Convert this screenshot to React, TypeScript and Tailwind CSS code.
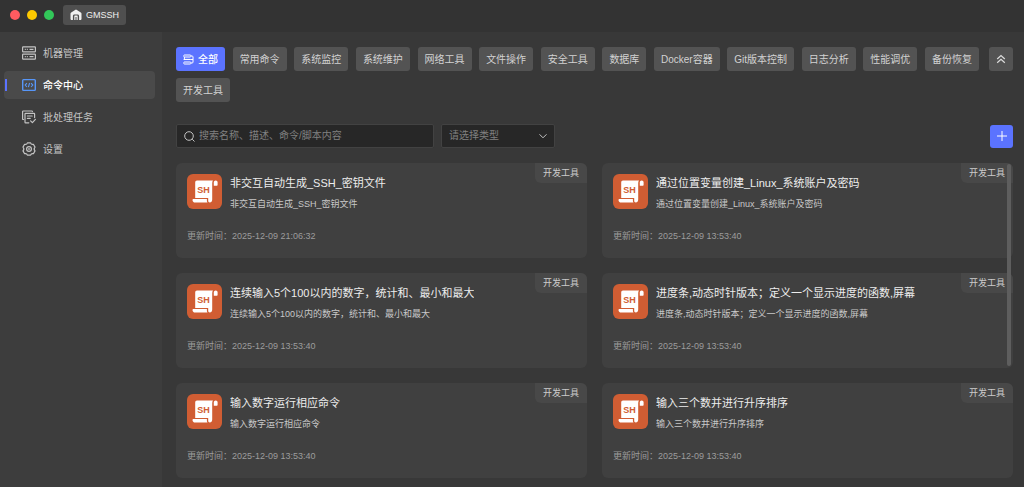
import { useState } from "react";
import type { ReactNode } from "react";

const tags = [
    "常用命令", "系统监控", "系统维护", "网络工具", "文件操作", "安全工具",
    "数据库", "Docker容器", "Git版本控制", "日志分析", "性能调优", "备份恢复",
];
const moreTags = ["开发工具"];

const scripts = [
    { title: "非交互自动生成_SSH_密钥文件", time: "2025-12-09 21:06:32" },
    { title: "通过位置变量创建_Linux_系统账户及密码", time: "2025-12-09 13:53:40" },
    { title: "连续输入5个100以内的数字，统计和、最小和最大", time: "2025-12-09 13:53:40" },
    { title: "进度条,动态时针版本；定义一个显示进度的函数,屏幕", time: "2025-12-09 13:53:40" },
    { title: "输入数字运行相应命令", time: "2025-12-09 13:53:40" },
    { title: "输入三个数并进行升序排序", time: "2025-12-09 13:53:40" },
];

function HomeIcon() {
    return (
        <svg viewBox="0 0 12 12" className="size-3" fill="currentColor" aria-hidden="true">
            <path fillRule="evenodd" d="M5.1.9a1.6 1.6 0 0 1 1.8 0l3.9 2.5c.5.3.7.8.7 1.4v5c0 .8-.5 1.3-1.200 1.300H9.100V7c0-1-.6-1.600-1.600-1.600h-3C3.500 5.400 2.900 6 2.900 7v4.100H1.700C1 11.100.5 10.600.5 9.800v-5c0-.6.2-1.100.7-1.400Z" />
            <path d="M4.300 7.100c0-.4.2-.6.6-.6h2.200c.4 0 .6.2.6.6v4H6.500V7.900h-1v3.200H4.300Z" />
        </svg>
    );
}

function ServerIcon() {
    return (
        <svg viewBox="0 0 14 14" className="size-3.5" fill="none" stroke="currentColor" strokeWidth="1.200" aria-hidden="true">
            <rect x=".6" y=".9" width="12.8" height="5" rx=".6" />
            <rect x=".6" y="8.1" width="12.8" height="5" rx=".6" />
            <path d="M2.800 3.400h1M4.800 3.400h1M7.500 3.400h4M2.800 10.600h1M4.800 10.600h1M7.500 10.600h4" />
        </svg>
    );
}

function CodeIcon() {
    return (
        <svg viewBox="0 0 14 14" className="size-3.5" fill="none" stroke="#5796f8" aria-hidden="true">
            <rect x=".7" y="1.6" width="12.6" height="10.8" rx=".8" strokeWidth="1.4" />
            <path d="M4.900 5.200 3.200 7.100 4.900 9M9.100 5.200l1.700 1.900L9.100 9M7.600 5 6.400 9.200" strokeWidth="1.100" />
        </svg>
    );
}

function TaskIcon() {
    return (
        <svg viewBox="0 0 14 14" className="size-3.5" fill="none" stroke="currentColor" strokeWidth="1.200" strokeLinecap="round" strokeLinejoin="round" aria-hidden="true">
            <path d="M1.600 9.500h-.4a.6.6 0 0 1-.6-.6V1.600a.6.6 0 0 1 .6-.6h8.600a.6.6 0 0 1 .6.6" />
            <path d="M12.600 7.600V3.900a.6.6 0 0 0-.6-.6H3.600a.6.6 0 0 0-.6.6v8.300a.6.6 0 0 0 .6.6h3.200" />
            <path d="M5.400 6h4.800M5.400 8.400h2.800M8.600 10.800l1.800 1.800 3-3.200" />
        </svg>
    );
}

function SettingsIcon() {
    return (
        <svg viewBox="0 0 14 14" className="size-3.5" fill="none" stroke="currentColor" strokeWidth="1.200" strokeLinejoin="round" aria-hidden="true">
            <path d="M5.400.8h3.200c.4 1.400 1.300 1.900 2.800 1.500L13 5.100c-1.100 1.200-1.100 2.600 0 3.800l-1.600 2.800c-1.500-.4-2.400.1-2.800 1.500H5.400c-.4-1.400-1.300-1.900-2.800-1.500L1 8.900c1.100-1.200 1.100-2.600 0-3.800l1.600-2.800c1.500.4 2.400-.1 2.800-1.500Z" />
            <circle cx="7" cy="7" r="2.400" />
            <circle cx="7" cy="7" r=".3" />
        </svg>
    );
}

function AllIcon() {
    return (
        <svg viewBox="0 0 11 11" className="size-[11px]" fill="none" stroke="currentColor" aria-hidden="true">
            <rect x=".8" y="1" width="7" height="2" rx=".6" />
            <path d="M1.400 3v2.400h6M.6 5.500h7.200" />
            <rect x=".8" y="8" width="7" height="2" rx=".6" />
            <path d="M7.800 2h1.300c.6 0 .9.300.9.900v5.200c0 .6-.3.900-.9.900H7.800M7.800 5.500H10" />
        </svg>
    );
}

function ScriptIcon() {
    return (
        <svg viewBox="0 0 35 35" className="size-[35px] shrink-0" aria-hidden="true">
            <rect width="35" height="35" rx="6" fill="#d05d33" />
            <path d="M10 6.600h16c-.6.8-.8 1.700-.8 2.800v16.200c0 1.900-1 2.900-2.400 2.900-1 0-1.600-.7-1.600-1.700v-2.800H8.200V8.600c0-1.200.7-2 1.800-2Z" fill="#fff" />
            <path d="M6.300 25h13.600v1.800c0 .7.200 1.200.6 1.700H8.200c-1.700 0-2.700-1.200-2.700-2.600 0-.6.300-.9.800-.9Z" fill="#fff" />
            <path d="M26.800 11.800V8.500c0-1.300.7-2 1.900-2s1.900.8 1.900 2v2.500c0 .5-.3.800-.8.800Z" fill="#fff" />
            <text x="16.600" y="19" textAnchor="middle" fontSize="9" fontWeight="700" fill="#d05d33">SH</text>
        </svg>
    );
}

function NavItem({ icon, label, active }: { icon: ReactNode; label: string; active?: boolean }) {
    return (
        <a
            href="#"
            className={
                active
                    ? "relative flex h-7 items-center gap-[7px] rounded-sm bg-[#4a4a4a] pl-[18px] font-medium text-white"
                    : "relative flex h-7 items-center gap-[7px] rounded-sm pl-[18px] text-[#c4c4c4]"
            }
        >
            {active && <span className="absolute left-px top-2 h-3 w-0.5 bg-[#5b73ff]" />}
            {icon}
            <span className="pt-0.5">{label}</span>
        </a>
    );
}

function Tag({ children }: { children: ReactNode }) {
    return (
        <button className="h-6 shrink-0 rounded-[3px] bg-[#535353] px-[7px] pt-0.5 text-[#d2d2d2]">{children}</button>
    );
}

function ScriptCard({ title, time }: { title: string; time: string }) {
    return (
        <article className="relative h-[95px] rounded-md bg-[#404040] px-[11px] pt-[11px]">
            <span className="absolute right-0 top-0 flex h-5 items-center rounded-tr-md rounded-bl-md bg-[#484848] px-2 text-[9px] text-[#cccccc]">
                开发工具
            </span>
            <div className="flex gap-2">
                <ScriptIcon />
                <div className="min-w-0">
                    <h3 className="truncate text-[11px] leading-[18px] text-[#ededed]">{title}</h3>
                    <p className="mt-1 truncate text-[9px] leading-4 text-[#c8c8c8]">{title}</p>
                </div>
            </div>
            <p className="mt-4 text-[9px] leading-4 text-[#9c9c9c]">更新时间：{time}</p>
        </article>
    );
}

export default function App() {
    const [expanded, setExpanded] = useState(true);

    return (
        <div className="flex min-h-screen flex-col bg-[#383838] font-['Liberation_Sans','Noto_Sans_CJK_SC',sans-serif] text-[10px] leading-4">
            <header className="flex h-8 items-center gap-[9px] bg-[#333333] pb-0.5 pl-2.5">
                <div className="flex gap-[7px]">
                    <span className="size-2.5 rounded-full bg-[#ff5b60]" />
                    <span className="size-2.5 rounded-full bg-[#fdc900]" />
                    <span className="size-2.5 rounded-full bg-[#32c759]" />
                </div>
                <button className="flex h-5 items-center gap-1 rounded-[3px] bg-[#4f4f4f] px-[7px] text-[9px] text-[#f0f0f0]">
                    <HomeIcon />
                    GMSSH
                </button>
            </header>

            <div className="flex flex-1">
                <nav className="flex w-[162px] shrink-0 flex-col gap-1 bg-[#3d3d3d] pl-1 pr-[7px] pt-[7px]">
                    <NavItem icon={<ServerIcon />} label="机器管理" />
                    <NavItem icon={<CodeIcon />} label="命令中心" active />
                    <NavItem icon={<TaskIcon />} label="批处理任务" />
                    <NavItem icon={<SettingsIcon />} label="设置" />
                </nav>

                <main className="min-w-0 flex-1 pl-3.5 pr-[11px] pt-[15px]">
                    <div className="flex items-start gap-2.5">
                        <div className="flex min-w-0 flex-1 flex-col gap-[7px]">
                            <div className="flex justify-between">
                                <button className="flex h-6 shrink-0 items-center gap-1 rounded-[3px] bg-[#5b73ff] px-[7px] font-medium text-white">
                                    <AllIcon />
                                    <span className="pt-0.5">全部</span>
                                </button>
                                {tags.map((tag) => (
                                    <Tag key={tag}>{tag}</Tag>
                                ))}
                            </div>
                            {expanded && (
                                <div className="flex gap-[7px]">
                                    {moreTags.map((tag) => (
                                        <Tag key={tag}>{tag}</Tag>
                                    ))}
                                </div>
                            )}
                        </div>
                        <button
                            aria-label="收起"
                            onClick={() => setExpanded(!expanded)}
                            className="flex size-6 shrink-0 items-center justify-center rounded-[3px] bg-[#535353] text-[#dddddd]"
                        >
                            <svg viewBox="0 0 10 10" className="size-2.5" fill="none" stroke="currentColor" strokeWidth="1.200" aria-hidden="true">
                                <path d="M1.200 5 5 1.500 8.800 5M1.200 8.800 5 5.300l3.800 3.500" />
                            </svg>
                        </button>
                    </div>

                    <div className="mt-[22px] flex items-center gap-[7px]">
                        <label className="flex h-6 w-[258px] items-center gap-1 rounded-xs border border-[#424242] bg-[#272727] px-[7px]">
                            <svg viewBox="0 0 11 11" className="size-[11px] shrink-0" fill="none" stroke="#c4c4c4" aria-hidden="true">
                                <circle cx="5" cy="5" r="4.300" />
                                <path d="m8.200 8.200 2.300 2.300" />
                            </svg>
                            <input
                                type="text"
                                aria-label="搜索"
                                placeholder="搜索名称、描述、命令/脚本内容"
                                className="min-w-0 flex-1 bg-transparent text-white outline-none placeholder:text-[#808080]"
                            />
                        </label>
                        <div className="relative">
                            <select
                                aria-label="类型"
                                className="h-6 w-[114px] appearance-none rounded-xs border border-[#424242] bg-[#272727] px-[7px] text-[#808080]"
                            >
                                <option>请选择类型</option>
                            </select>
                            <svg viewBox="0 0 8 8" className="pointer-events-none absolute right-2 top-2 size-2" fill="none" stroke="#c4c4c4" aria-hidden="true">
                                <path d="M.5 2.300 4 5.800l3.500-3.500" />
                            </svg>
                        </div>
                        <button aria-label="新增" className="ml-auto flex size-[23px] items-center justify-center rounded-[3px] bg-[#5b73ff] text-white">
                            <svg viewBox="0 0 10 10" className="size-2.5" fill="none" stroke="currentColor" aria-hidden="true">
                                <path d="M5 0v10M0 5h10" />
                            </svg>
                        </button>
                    </div>

                    <section className="relative mt-[15px] grid grid-cols-2 gap-[15px]">
                        {scripts.map((script) => (
                            <ScriptCard key={script.title} title={script.title} time={script.time} />
                        ))}
                        <span className="absolute right-0.5 top-px h-[202px] w-1 rounded-full bg-[#5e5e5e]" />
                    </section>
                </main>
            </div>
        </div>
    );
}
